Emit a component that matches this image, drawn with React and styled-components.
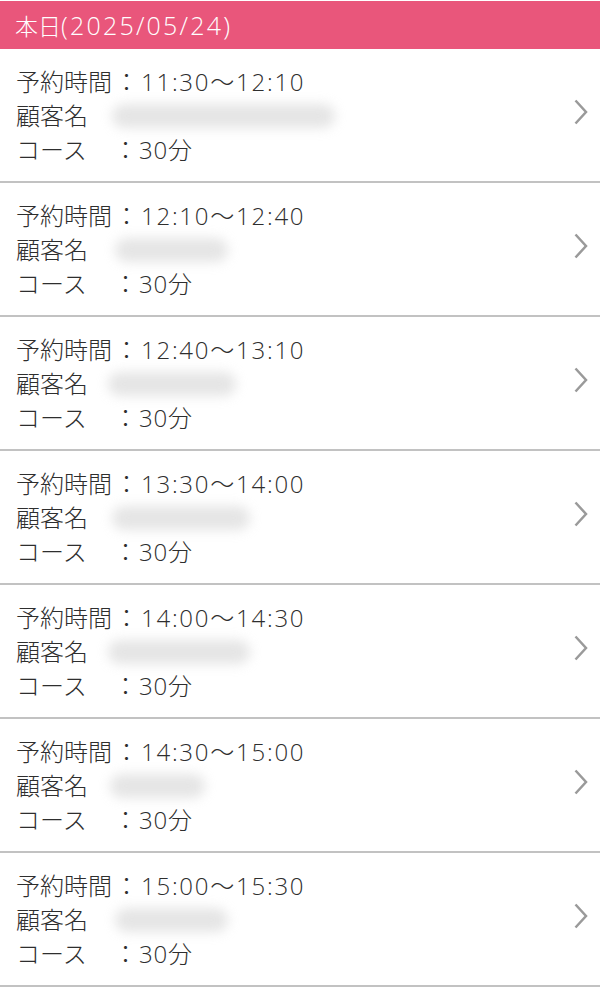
import React from "react";
import styled, { createGlobalStyle } from "styled-components";

const Global = createGlobalStyle`
  body {
    margin: 0;
    background: #fff;
    font-family: "Open Sans", "Noto Sans CJK JP", sans-serif;
    font-weight: 300;
    color: #2e2e2e;
  }
`;

const Page = styled.div`
  width: 600px;
  display: flex;
  flex-direction: column;`
const Header = styled.header`
  height: 48px;
  margin-top: 1px;
  background-color: #e9567b;
  color: #fff;
  font-size: 23px;
  display: flex;
  align-items: center;
  padding-left: 15px;`
const Num = styled.span`
  font-size: ${(p) => p.size || 24}px;
  letter-spacing: ${(p) => p.spacing ?? 1.75}px;`
const Row = styled.div`
  display: flex;
  align-items: center;
  justify-content: space-between;
  padding: 16px 12px 14px 16px;
  border-bottom: 2px solid #c2c2c2;`
const Info = styled.div`
  display: flex;
  flex-direction: column;
  font-size: 24px;
  line-height: 34px;`
const Line = styled.div`
  display: flex;
  align-items: center;
  white-space: pre;`
const Label = styled.span`
  width: 96px;`
const Colon = styled.span`
  width: ${(p) => p.w || 29}px;
  text-align: center;`
const Blur = styled.span`
  display: inline-block;
  margin-left: ${(p) => p.offset}px;
  width: ${(p) => p.w}px;
  height: 24px;
  border-radius: 12px;
  background: #d4d4d4;
  filter: blur(6px);
  opacity: 0.6;`
const Chevron = styled.svg`
  width: 14px;
  height: 26px;
  margin-bottom: 8px;
  flex-shrink: 0;`

const items = [
  { time: "11:30〜12:10", start: 112, end: 335 },
  { time: "12:10〜12:40", start: 115, end: 228 },
  { time: "12:40〜13:10", start: 108, end: 236 },
  { time: "13:30〜14:00", start: 112, end: 250 },
  { time: "14:00〜14:30", start: 108, end: 250 },
  { time: "14:30〜15:00", start: 110, end: 205 },
  { time: "15:00〜15:30", start: 115, end: 228 },
];

const App = () => {
  return (
    <Page>
      <Global />
      <Header>
        本日<Num size={25} spacing={2.2}>(2025/05/24)</Num>
      </Header>
      {items.map((it) => (
        <Row key={it.time}>
          <Info>
            <Line>
              <Label>予約時間</Label>
              <Colon>：</Colon>
              <Num>{it.time}</Num>
            </Line>
            <Line>
              <Label>顧客名</Label>
              <Blur offset={it.start - 112} w={it.end - it.start} />
            </Line>
            <Line>
              <Label>コース</Label>
              <Colon w={27}>：</Colon>
              <Num spacing={0.8}>30</Num>分
            </Line>
          </Info>
          <Chevron viewBox="0 0 14 26">
            <path d="M1.5 1.5 L12 13 L1.5 24.5" fill="none" stroke="#9a9a9a" strokeWidth="2.5" />
          </Chevron>
        </Row>
      ))}
    </Page>
  );
};

export default App;
